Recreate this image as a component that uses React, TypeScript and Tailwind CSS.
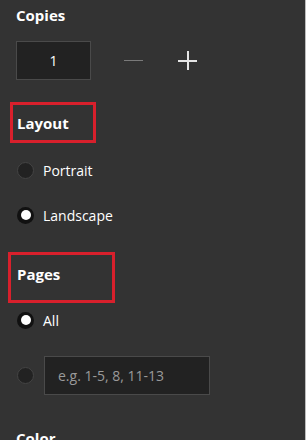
import React from 'react'

const font = { fontFamily: '"Open Sans", "Noto Sans", sans-serif' }

function Radio({ checked }: { checked?: boolean }) {
  return checked ? (
    <span className="flex h-[17px] w-[17px] shrink-0 items-center justify-center rounded-full bg-[#111]">
      <span className="h-[10px] w-[10px] rounded-full bg-white" />
    </span>
  ) : (
    <span className="h-[17px] w-[17px] shrink-0 rounded-full border border-[#444] bg-[#222]" />
  )
}

function Option({ label, checked }: { label: string; checked?: boolean }) {
  return (
    <div className="flex h-5 items-center gap-[9px] pl-px">
      <Radio checked={checked} />
      <span className="text-[14px] text-white">{label}</span>
    </div>
  )
}

export default function App() {
  return (
    <div
      className="flex h-[440px] w-[308px] overflow-hidden bg-[#333333]"
      style={font}
    >
      <div className="flex-1 pl-4 pt-[5px]">
        {/* Copies */}
        <h2 className="text-[15px] font-bold leading-5 text-white">Copies</h2>
        <div className="mt-[16px] flex items-center">
          <div className="flex h-[39px] w-[75px] items-center justify-center border border-[#4a4a4a] bg-[#222] text-[14px] text-white">
            1
          </div>
          <span className="ml-[33px] h-px w-[19px] bg-[#7a7a7a]" />
          <span className="relative ml-[35px] h-[19px] w-[19px]">
            <span className="absolute left-0 top-[9px] h-[1.5px] w-[19px] bg-[#e5e5e5]" />
            <span className="absolute left-[9px] top-0 h-[19px] w-[1.5px] bg-[#e5e5e5]" />
          </span>
        </div>

        {/* Layout */}
        <div className="-ml-[6px] mt-[22px] flex h-[41px] w-[86px] items-center border-[3px] border-[#d8202c] pl-[4px]">
          <h2 className="text-[15px] font-bold leading-5 text-white">Layout</h2>
        </div>
        <div className="mt-[17px]">
          <Option label="Portrait" />
        </div>
        <div className="mt-[25px]">
          <Option label="Landscape" checked />
        </div>

        {/* Pages */}
        <div className="-ml-[8px] mt-[27px] h-[51px] w-[107px] border-[3px] border-[#d8202c] pl-[6px] pt-[9px]">
          <h2 className="text-[15px] font-bold leading-5 text-white">Pages</h2>
        </div>
        <div className="mt-[7px]">
          <Option label="All" checked />
        </div>
        <div className="mt-[26px] flex items-center gap-[10px] pl-px">
          <Radio />
          <div className="flex h-[39px] w-[166px] items-center border border-[#4a4a4a] bg-[#222] pl-[13px] text-[14px] text-[#9a9a9a]">
            e.g. 1-5, 8, 11-13
          </div>
        </div>

        {/* Color */}
        <h2 className="mt-[33px] text-[15px] font-bold leading-5 text-white">Color</h2>
      </div>
      <div className="w-[3px] shrink-0 border-l border-[#bdbdbd] bg-white" />
    </div>
  )
}
